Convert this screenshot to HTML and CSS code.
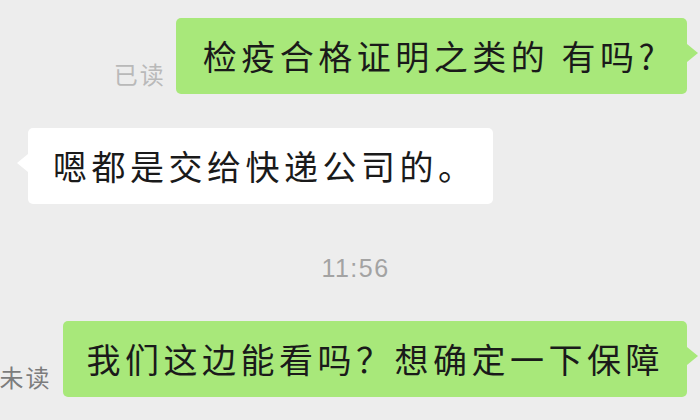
FILE: index.html
```html
<!DOCTYPE html>
<html lang="zh">
<head>
<meta charset="utf-8">
<link rel="stylesheet" href="styles.css">
</head>
<body>
<div class="chat">
  <div class="row row-out row-first">
    <span class="status status-read">已读</span>
    <div class="bubble bubble-out b1">检疫合格证明之类的 有吗?</div>
  </div>
  <div class="row row-in">
    <div class="bubble bubble-in b2">嗯都是交给快递公司的。</div>
  </div>
  <div class="time">11:56</div>
  <div class="row row-out row-last">
    <span class="status status-unread">未读</span>
    <div class="bubble bubble-out b3">我们这边能看吗？想确定一下保障</div>
  </div>
</div>
</body>
</html>
```

FILE: styles.css
```css
html, body {
  margin: 0;
  padding: 0;
  background: #ededed;
  width: 700px;
  height: 420px;
  overflow: hidden;
}

.chat {
  display: flex;
  flex-direction: column;
  padding: 18px 13px 0 0;
  font-family: "Noto Sans CJK SC", "Noto Sans", sans-serif;
}

.row {
  display: flex;
  align-items: flex-end;
}

.row-out {
  justify-content: flex-end;
}

.row-in {
  justify-content: flex-start;
  margin-top: 34px;
  padding-left: 28px;
}

.bubble {
  position: relative;
  flex-shrink: 0;
  font-size: 34px;
  line-height: 40px;
  letter-spacing: 4.5px;
  color: #1a1a1a;
  padding: 18px 24px 18px 25px;
  border-radius: 5px;
  white-space: nowrap;
}

.b1 {
  padding-left: 27px;
  padding-right: 28px;
}

.b2 {
  padding-left: 25px;
  padding-right: 16px;
}

.b3 {
  padding-left: 24px;
  padding-right: 23px;
}

.bubble-out {
  background: #a8e87a;
}

.bubble-in {
  background: #ffffff;
}

.bubble-out::after {
  content: "";
  position: absolute;
  right: -11px;
  top: 26px;
  border-top: 9px solid transparent;
  border-bottom: 9px solid transparent;
  border-left: 11px solid #a8e87a;
}

.bubble-in::after {
  content: "";
  position: absolute;
  left: -11px;
  top: 26px;
  border-top: 9px solid transparent;
  border-bottom: 9px solid transparent;
  border-right: 11px solid #ffffff;
}

.status {
  flex-shrink: 0;
  white-space: nowrap;
  font-size: 24px;
  line-height: 30px;
  margin-right: 10px;
  margin-bottom: 5px;
  letter-spacing: 2px;
}

.status-read {
  color: #b9b9b9;
}

.status-unread {
  color: #7c7c7c;
  margin-right: 11px;
}

.time {
  align-self: center;
  margin: 49px 0 38px 0;
  font-family: "Liberation Sans", "Noto Sans", sans-serif;
  font-size: 25px;
  line-height: 30px;
  letter-spacing: 1.5px;
  color: #a3a3a3;
  padding-left: 24px;
}
```
